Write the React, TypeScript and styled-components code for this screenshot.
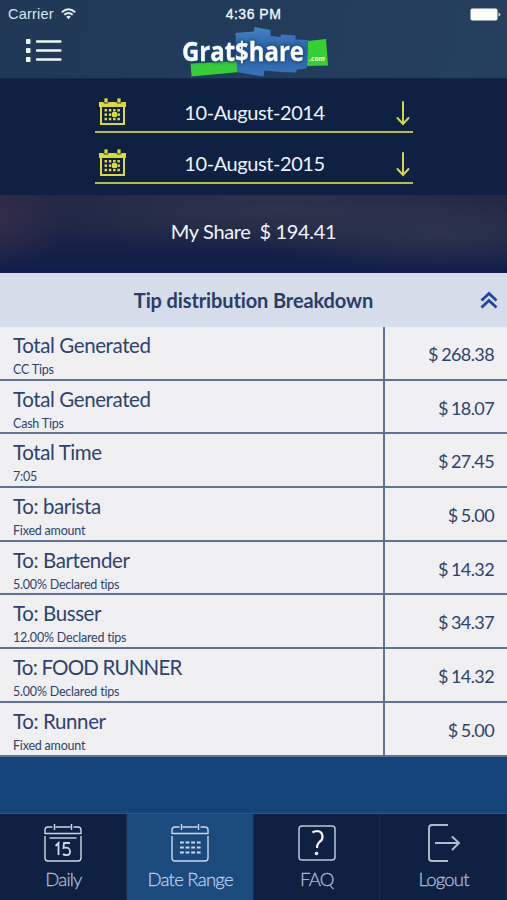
import React from "react";
import styled, { createGlobalStyle } from "styled-components";

const GlobalStyle = createGlobalStyle`
  * { box-sizing: border-box; }
  body { margin: 0; background: #14437a; }
`;

const Screen = styled.main`
  width: 507px;
  height: 900px;
  display: flex;
  flex-direction: column;
  overflow: hidden;
  font-family: Lato, sans-serif;
  font-variant-ligatures: none;
  background: linear-gradient(#174a80, #14437a);
`;

const Header = styled.header`
  height: 79px;
  flex: none;
  background: linear-gradient(100deg, #213856, #253f5e);
  border-bottom: 1px solid #14294a;
`;

const StatusBar = styled.div`
  height: 28px;
  padding: 0 8px;
  display: grid;
  grid-template-columns: 1fr auto 1fr;
  align-items: center;
  color: #f1f6fb;
  font: 14px/28px "Liberation Sans", Arial, sans-serif;
`;

const Carrier = styled.div`
  display: flex;
  align-items: center;
  gap: 7px;
  color: #d9e5f0;
  font-size: 14.5px;
  letter-spacing: 0.2px;
`;

const Clock = styled.span`
  font-size: 14px;
  letter-spacing: 0.5px;
  -webkit-text-stroke: 0.35px currentColor;
`;

const BatterySlot = styled.div`
  display: flex;
  justify-content: flex-end;
  margin-right: -2px;
`;

const TitleBar = styled.div`
  height: 50px;
  display: grid;
  grid-template-columns: 1fr 150px 1fr;
  padding: 0 25px;
`;

const MenuButton = styled.button`
  width: 38px;
  height: 46px;
  padding: 0;
  border: 0;
  background: none;
  display: flex;
  align-items: center;
`;

const Dates = styled.section`
  height: 116px;
  flex: none;
  padding: 2px 94px 0 95px;
  background: #0e2142;
`;

const DateField = styled.div`
  height: 51.5px;
  border-bottom: 2px solid #b8bd4a;
  display: grid;
  grid-template-columns: 29px 1fr 16px;
  align-items: end;
  padding: 0 2px 5px 3px;
  color: #edf4fc;
  font-size: 20px;
  line-height: 28px;
  text-align: center;
`;

const DateText = styled.span`
  letter-spacing: -0.42px;
  padding-right: 13px;
`;

const Share = styled.section`
  height: 78px;
  flex: none;
  padding: 0 0 6px;
  display: flex;
  align-items: center;
  justify-content: center;
  gap: 9px;
  color: #f1f4fb;
  font-size: 20px;
  letter-spacing: -0.35px;
  background:
    radial-gradient(ellipse 65px 55px at 0 22px, #3b304ab0, transparent),
    radial-gradient(ellipse 280px 42px at 280px 15px, #32384ecc, transparent),
    radial-gradient(ellipse 180px 38px at 440px 40px, #32384ebb, transparent),
    linear-gradient(#202642 0, #1c2445 45%, #101d4d 100%);
`;

const BreakdownHeader = styled.div`
  height: 54px;
  flex: none;
  display: grid;
  grid-template-columns: 1fr 18px;
  align-items: center;
  padding: 0 9px 0 0;
  background: #d4dde9;
  color: #293d68;
`;

const BreakdownTitle = styled.h1`
  margin: 0;
  padding-left: 27px;
  text-align: center;
  font-size: 20px;
  line-height: 24px;
  letter-spacing: -0.12px;
  font-weight: 700;
`;

const Table = styled.div`
  flex: none;
  background: #f0f0f2;
`;

const Row = styled.div`
  height: 53.7px;
  display: grid;
  grid-template-columns: 385px 1fr;
  border-bottom: 2px solid #5f7294;
  color: #2d436f;
`;

const Description = styled.div`
  border-right: 2px solid #5f7294;
  padding: 5px 0 0 13px;
`;

const Name = styled.div<{ $tight?: boolean }>`
  font-size: 20.5px;
  line-height: 26px;
  letter-spacing: ${({ $tight }) => ($tight ? "-0.8px" : "-0.4px")};
`;

const Detail = styled.div`
  font-size: 12.5px;
  line-height: 15px;
  letter-spacing: -0.2px;
  margin-top: 4px;
`;

const Amount = styled.div`
  padding: 2px 13px 0 0;
  display: flex;
  align-items: center;
  justify-content: flex-end;
  font-size: 18px;
  letter-spacing: -0.6px;
  word-spacing: -0.8px;
`;

const TabBar = styled.nav`
  margin-top: auto;
  height: 87px;
  flex: none;
  display: grid;
  grid-template-columns: repeat(4, 1fr);
  border-top: 1px solid #30577d;
`;

const Tab = styled.button<{ $active?: boolean }>`
  border: 0;
  border-right: 1px solid #172c4c;
  padding: 9px 0 0 1px;
  display: flex;
  flex-direction: column;
  align-items: center;
  gap: 3px;
  background: ${({ $active }) => ($active ? "#1b4a7d" : "#0e2142")};
  color: ${({ $active }) => ($active ? "#b9cee4" : "#afbed2")};
  font: 300 18.5px/26px Lato, sans-serif;
  letter-spacing: -0.75px;
  -webkit-text-stroke: 0.3px currentColor;
`;

const Wifi = () => (
  <svg width="15" height="12" viewBox="0 0 15 12" fill="none" stroke="#e2edf6" strokeWidth="1.9">
    <path d="M.8 4.2Q7.5-1.6 14.2 4.2M3.3 6.8Q7.5 3.1 11.7 6.8" />
    <path d="M7.5 11.3 5.2 8.8Q7.5 6.9 9.8 8.8Z" fill="#e2edf6" stroke="none" />
  </svg>
);

const Battery = () => (
  <svg width="31" height="13" viewBox="0 0 31 13" fill="#fff">
    <rect x=".5" y=".5" width="27" height="12" rx="1.8" />
    <path d="M28.5 4.5q2 .3 2 2t-2 2Z" opacity=".75" />
  </svg>
);

const MenuIcon = () => (
  <svg width="38" height="26" viewBox="0 0 38 26" fill="#edfafa">
    {[1, 10, 19].map((y) => (
      <React.Fragment key={y}>
        <rect x="1" y={y} width="4.5" height="5" rx=".7" />
        <rect x="11" y={y + 1.2} width="25.5" height="2.6" rx=".8" />
      </React.Fragment>
    ))}
  </svg>
);

const LogoSvg = styled.svg`
  overflow: visible;
`;

const Wordmark = styled.text`
  font: 700 27.5px "Open Sans", sans-serif;
  fill: #fff;
  stroke: #fff;
  stroke-width: 0.3px;
  filter: drop-shadow(0 0 1.5px #164684) drop-shadow(0 0 2px #164684);
`;

const Suffix = styled.text`
  font: italic 700 7.5px "Open Sans", sans-serif;
  fill: #e9f9e8;
`;

const Logo = () => (
  <LogoSvg width="150" height="51" viewBox="0 0 150 51">
    <defs>
      <linearGradient id="logoBlue" x2="0" y2="1">
        <stop stopColor="#4383c3" />
        <stop offset=".5" stopColor="#2a60a8" />
        <stop offset="1" stopColor="#3976ba" />
      </linearGradient>
    </defs>
    <path d="M11.5 35.5 60 33v11l-47.5 4.500Z" fill="#35cf35" />
    <path d="M56.500 5 75 3.500l.5-4.500 16 3v6l10 1 .5-2.500 14.500 1v4l12.500.5-1.500 28.500-9.500 1-1 3-14.500-.5-17-1.500-1 6L69 46l-11-2Z" fill="url(#logoBlue)" />
    <path d="m129 13 18-2 2 26.500-21 .5Z" fill="#35cf35" />
    <Wordmark x="3" y="33" textLength="122" lengthAdjust="spacingAndGlyphs">Grat$hare</Wordmark>
    <Suffix x="130" y="32.500" textLength="16" lengthAdjust="spacingAndGlyphs">.com</Suffix>
  </LogoSvg>
);

const DateIcon = () => (
  <svg width="29" height="29" viewBox="0 0 29 29" fill="#dcda3b">
    <path fillRule="evenodd" d="M1 5h27v5h-1v18H2V10H1ZM4 10h21v16H4Z" />
    <path d="M6 1h4v5H6ZM19 1h4v5h-4Z" stroke="#0e2142" strokeWidth=".8" />
    {[12, 16.4, 20.8].map((y) =>
      [6.5, 10.8, 15.1, 19.4].map((x) => (
        <rect key={`${x}-${y}`} x={x} y={y} width="2.5" height="2.5" />
      ))
    )}
    <rect x="14" y="15" width="5" height="5" rx="1" />
  </svg>
);

const DownArrow = () => (
  <svg width="16" height="26" viewBox="0 0 16 26" fill="none" stroke="#d3d350" strokeWidth="2" strokeLinecap="round">
    <path d="M8 2v21M2.5 18 8 24l5.5-6" />
  </svg>
);

const CollapseIcon = () => (
  <svg width="18" height="18" viewBox="0 0 18 18" fill="none" stroke="#23489b" strokeWidth="2.8">
    <path d="m1.5 9.5 7.5-7 7.5 7M1.5 16.5l7.5-7 7.5 7" />
  </svg>
);

const CalendarFrame = ({ children }: { children: React.ReactNode }) => (
  <svg width="40" height="40" viewBox="0 0 40 40" fill="none" stroke="#cdd9e7" strokeWidth="1.4">
    <path d="M9.5 4H5Q2 4 2 7v3.5h36V7q0-3-3-3h-4.5M12.5 4h15M11.5 1v6M28.5 1v6M2 13v22q0 3 3 3h30q3 0 3-3V13" />
    {children}
  </svg>
);

const DailyIcon = () => (
  <CalendarFrame>
    <path d="M6.5 15h27" />
    <path d="m12.5 23 3-3v12M27 20h-6l-.5 5q6-1.5 6.500 3t-4 4q-2 0-3-1" strokeWidth="1.8" />
  </CalendarFrame>
);

const RangeIcon = () => (
  <CalendarFrame>
    <path d="M10 19.5h21M10 24.5h21M10 29.5h21" strokeWidth="2" strokeDasharray="3.8 1.8" />
  </CalendarFrame>
);

const FaqIcon = () => (
  <svg width="40" height="40" viewBox="0 0 40 40" fill="none" stroke="#b9c7dc" strokeWidth="1.5">
    <rect x="2" y="3" width="36" height="34" rx="3" />
    <path d="M15.5 9.5q2-1.5 5-1.5 5 .5 5 6 0 3-3 5-2.500 2-2.500 6" stroke="#f8fbff" strokeWidth="2.2" />
    <circle cx="19.5" cy="30.5" r="1.8" fill="#f8fbff" stroke="none" />
  </svg>
);

const LogoutIcon = () => (
  <svg width="40" height="40" viewBox="0 0 40 40" fill="none" stroke="#aebed2" strokeWidth="1.9">
    <path d="M24 2H8Q5 2 5 5v30q0 3 3 3h16M11 20h24M28 13.5l7 6.5-7 7" />
  </svg>
);

const rows = [
  { name: "Total Generated", detail: "CC Tips", amount: "$ 268.38" },
  { name: "Total Generated", detail: "Cash Tips", amount: "$ 18.07" },
  { name: "Total Time", detail: "7:05", amount: "$ 27.45" },
  { name: "To: barista", detail: "Fixed amount", amount: "$ 5.00" },
  { name: "To: Bartender", detail: "5.00% Declared tips", amount: "$ 14.32" },
  { name: "To: Busser", detail: "12.00% Declared tips", amount: "$ 34.37" },
  { name: "To: FOOD RUNNER", detail: "5.00% Declared tips", amount: "$ 14.32", tight: true },
  { name: "To: Runner", detail: "Fixed amount", amount: "$ 5.00" },
];

const tabs = [
  { label: "Daily", Icon: DailyIcon },
  { label: "Date Range", Icon: RangeIcon, active: true },
  { label: "FAQ", Icon: FaqIcon },
  { label: "Logout", Icon: LogoutIcon },
];

export default function App() {
  return (
    <Screen>
      <GlobalStyle />
      <Header>
        <StatusBar>
          <Carrier>Carrier <Wifi /></Carrier>
          <Clock>4:36 PM</Clock>
          <BatterySlot><Battery /></BatterySlot>
        </StatusBar>
        <TitleBar>
          <MenuButton aria-label="Menu"><MenuIcon /></MenuButton>
          <Logo />
        </TitleBar>
      </Header>
      <Dates>
        {["10-August-2014", "10-August-2015"].map((date) => (
          <DateField key={date}>
            <DateIcon />
            <DateText>{date}</DateText>
            <DownArrow />
          </DateField>
        ))}
      </Dates>
      <Share><span>My Share</span><span>$ 194.41</span></Share>
      <BreakdownHeader>
        <BreakdownTitle>Tip distribution Breakdown</BreakdownTitle>
        <CollapseIcon />
      </BreakdownHeader>
      <Table>
        {rows.map(({ name, detail, amount, tight }, i) => (
          <Row key={i}>
            <Description>
              <Name $tight={tight}>{name}</Name>
              <Detail>{detail}</Detail>
            </Description>
            <Amount>{amount}</Amount>
          </Row>
        ))}
      </Table>
      <TabBar>
        {tabs.map(({ label, Icon, active }) => (
          <Tab key={label} $active={active}><Icon />{label}</Tab>
        ))}
      </TabBar>
    </Screen>
  );
}
